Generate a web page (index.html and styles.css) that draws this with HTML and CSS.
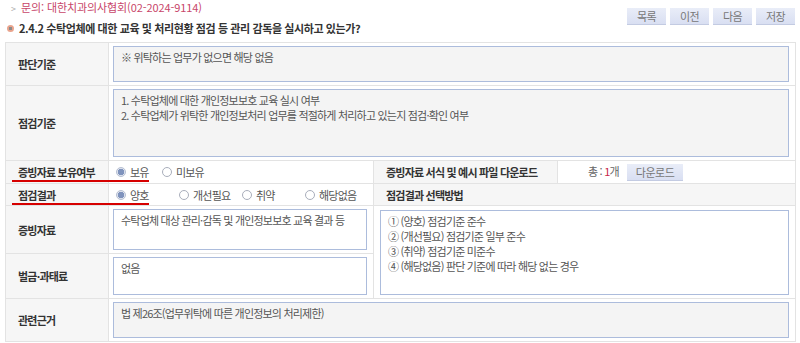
FILE: index.html
```html
<!DOCTYPE html>
<html lang="ko">
<head>
  <meta charset="UTF-8">
  <title>점검 항목 2.4.2</title>
  <link rel="stylesheet" href="styles.css">
</head>
<body>
  <div class="head">
    <div class="head-text">
      <p class="inquiry"><span class="arr">&gt;</span>문의: 대한치과의사협회(02-2024-9114)</p>
      <h1 class="title"><span class="dot"></span>2.4.2 수탁업체에 대한 교육 및 처리현황 점검 등 관리 감독을 실시하고 있는가?</h1>
    </div>
    <div class="btns">
      <button type="button">목록</button>
      <button type="button">이전</button>
      <button type="button">다음</button>
      <button type="button">저장</button>
    </div>
  </div>

  <table class="check">
    <colgroup>
      <col class="c1"><col class="c2"><col class="c3"><col class="c4">
    </colgroup>
    <tr>
      <th>판단기준</th>
      <td colspan="3"><div class="box ro h36">※ 위탁하는 업무가 없으면 해당 없음</div></td>
    </tr>
    <tr>
      <th>점검기준</th>
      <td colspan="3">
        <div class="box ro h68">1. 수탁업체에 대한 개인정보보호 교육 실시 여부<br>2. 수탁업체가 위탁한 개인정보처리 업무를 적절하게 처리하고 있는지 점검·확인 여부</div>
      </td>
    </tr>
    <tr class="r-own">
      <th><span class="mark">증빙자료 보유여부</span></th>
      <td>
        <span class="opt"><span class="radio on"></span>보유</span>
        <span class="opt"><span class="radio"></span>미보유</span>
      </td>
      <th class="sub">증빙자료 서식 및 예시 파일 다운로드</th>
      <td class="files">총 : <em>1</em>개 <button type="button" class="dl">다운로드</button></td>
    </tr>
    <tr class="r-result">
      <th><span class="mark">점검결과</span></th>
      <td>
        <div class="opts">
          <span class="opt w"><span class="radio on"></span>양호</span>
          <span class="opt w"><span class="radio"></span>개선필요</span>
          <span class="opt w"><span class="radio"></span>취약</span>
          <span class="opt w"><span class="radio"></span>해당없음</span>
        </div>
      </td>
      <th class="sub" colspan="2">점검결과 선택방법</th>
    </tr>
    <tr>
      <th>증빙자료</th>
      <td><div class="box h41">수탁업체 대상 관리·감독 및 개인정보보호 교육 결과 등</div></td>
      <td colspan="2" rowspan="2" class="side">
        <div class="box h85">① (양호) 점검기준 준수<br>② (개선필요) 점검기준 일부 준수<br>③ (취약) 점검기준 미준수<br>④ (해당없음) 판단 기준에 따라 해당 없는 경우</div>
      </td>
    </tr>
    <tr>
      <th>벌금·과태료</th>
      <td><div class="box h38">없음</div></td>
    </tr>
    <tr>
      <th>관련근거</th>
      <td colspan="3"><div class="box ro h36">법 제26조(업무위탁에 따른 개인정보의 처리제한)</div></td>
    </tr>
  </table>
</body>
</html>
```

FILE: styles.css
```css
/* check sheet item */
body {
  margin: 0;
  font-family: "Noto Sans CJK KR", "Noto Sans", sans-serif;
  font-size: 11px;
  letter-spacing: -0.8px;
  color: #555;
  background: #fff;
}
.head {
  display: flex;
  justify-content: space-between;
  height: 42px;
  padding: 0 5px 0 7px;
}
.inquiry {
  margin: 0;
  padding: 1px 0 0 4px;
  line-height: 13px;
  letter-spacing: -0.1px;
  color: #c8466a;
}
.inquiry .arr {
  color: #aaa;
  font-size: 9px;
  margin-right: 5px;
}
.title {
  display: flex;
  align-items: center;
  margin: 6px 0 0;
  font-size: 11px;
  line-height: 14px;
  letter-spacing: -0.4px;
  font-weight: bold;
  color: #333;
}
.title .dot {
  width: 7px;
  height: 7px;
  margin-right: 5px;
  border-radius: 50%;
  background: radial-gradient(circle, #8a8a8a 0 1.5px, #e9a38c 2px);
}
.btns {
  display: flex;
  gap: 4px;
  padding-top: 8px;
}
.btns button, .dl {
  width: 39px;
  height: 17px;
  padding: 0;
  border: none;
  border-bottom: 1px solid #c3cbe2;
  background: linear-gradient(#e9edf8, #d9dff2);
  font-family: inherit;
  font-size: 11px;
  letter-spacing: -0.5px;
  color: #777;
}
.check {
  width: 790px;
  margin-left: 5px;
  border-collapse: collapse;
  table-layout: fixed;
}
.c1 { width: 103px; }
.c2 { width: 265px; }
.c3 { width: 184px; }
.c4 { width: 238px; }
.check th, .check td {
  border: 1px solid #e3e3e3;
}
.check th {
  padding: 0 12px;
  background: #f6f6f6;
  text-align: left;
  font-weight: bold;
  color: #333;
}
.check td {
  padding: 3px 6px 3px 4px;
}
.check td.side {
  padding-left: 6px;
}
.box {
  box-sizing: border-box;
  border: 1px solid #acbcdc;
  padding: 3px 7px;
  line-height: 15px;
  background: #fff;
}
.box.ro { background: #f4f4f4; }
.h36 { height: 36px; }
.h38 { height: 38px; }
.h41 { height: 41px; }
.h68 { height: 68px; }
.h85 { height: 85px; }
.r-own { height: 23px; }
.r-result { height: 22px; }
.r-own td, .r-result td {
  padding: 0 0 0 7px;
  white-space: nowrap;
}
.check .sub {
  padding-left: 12px;
}
.mark {
  position: relative;
}
.mark::after {
  content: "";
  position: absolute;
  left: -6px;
  bottom: -2px;
  width: 137px;
  height: 2px;
  background: #d60000;
}
.opts {
  display: flex;
}
.opt {
  display: inline-flex;
  align-items: center;
  margin-right: 11px;
}
.opt.w {
  width: 63px;
  margin-right: 0;
}
.radio {
  box-sizing: border-box;
  width: 10px;
  height: 10px;
  margin-right: 4px;
  border: 1px solid #a9aebb;
  border-radius: 50%;
  background: #fff;
}
.radio.on {
  border-color: #b7c0d3;
  background: radial-gradient(circle, #7f93bd 0 3px, #dfe4ee 3.5px);
}
.files {
  padding-left: 30px !important;
  color: #666;
}
.files em {
  font-style: normal;
  color: #c8264a;
}
.dl {
  width: 56px;
  margin-left: 6px;
  vertical-align: middle;
}
```
